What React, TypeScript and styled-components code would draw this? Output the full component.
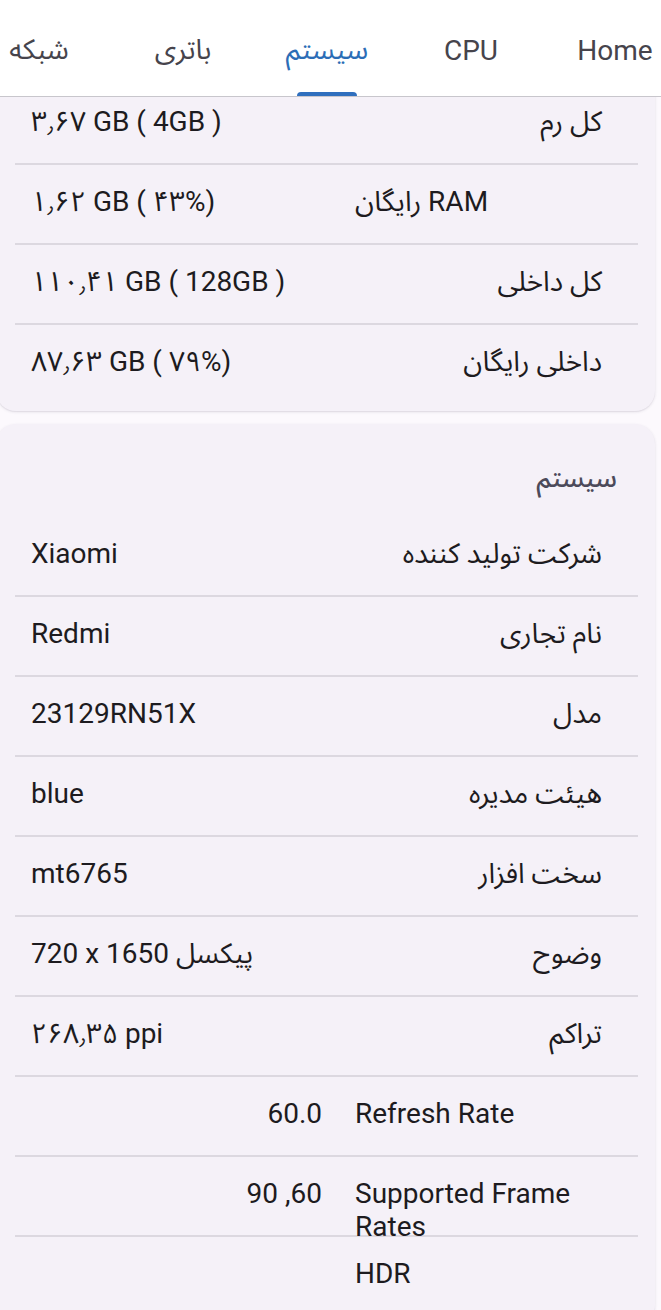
import React from "react";
import styled, { createGlobalStyle } from "styled-components";

const GlobalStyle = createGlobalStyle`
  html, body {
    margin: 0;
    padding: 0;
    height: 1310px;
    overflow: hidden;
    background: #fcf9fd;
    font-family: Roboto, "Noto Sans Arabic", "DejaVu Sans", sans-serif;
    color: #1d1b20;
  }
  * { box-sizing: border-box; }
`;

const Screen = styled.main`
  display: flex;
  flex-direction: column;
  height: 1310px;
  overflow: hidden;
`;

const TabBar = styled.nav`
  height: 97px;
  background: #ffffff;
  border-bottom: 1px solid #c8c6cc;
  overflow: hidden;
  flex-shrink: 0;
  position: relative;
  z-index: 2;
`;

const TabTrack = styled.div`
  display: flex;
  direction: rtl;
  width: 720px;
  height: 100%;
  margin-left: -33px;
`;

const Tab = styled.div<{ $active?: boolean }>`
  flex: 1;
  position: relative;
  display: flex;
  align-items: center;
  justify-content: center;
  padding-top: 4px;
  font-size: 28px;
  color: ${({ $active }) => ($active ? "#2c6db6" : "#46444c")};
`;

const Indicator = styled.span`
  position: absolute;
  bottom: -1px;
  left: 50%;
  width: 60px;
  height: 5px;
  margin-left: -30px;
  background: #2f6fbe;
  border-radius: 4px 4px 0 0;
`;

const Content = styled.section`
  flex: 1;
  overflow: hidden;
  display: flex;
  flex-direction: column;
  gap: 13px;
`;

const Card = styled.div<{ $cut?: boolean }>`
  margin: ${({ $cut }) => ($cut ? "-12px 6px 0 -4px" : "0 6px 0 -4px")};
  padding: 0 17px 8px 19px;
  background: #f5f1f8;
  border-radius: ${({ $cut }) => ($cut ? "0 0 20px 20px" : "20px")};
  box-shadow: 0 1px 3px rgba(60, 50, 80, 0.12), 0 1px 1px rgba(60, 50, 80, 0.06);
  flex-shrink: 0;
`;

const CardTitle = styled.h2`
  margin: 0;
  padding: 39px 21px 24px 0;
  direction: rtl;
  text-align: right;
  font-size: 26px;
  line-height: 30px;
  font-weight: 500;
  color: #4c4a5a;
`;

const Row = styled.div<{ $last?: boolean }>`
  display: grid;
  grid-template-columns: 247px 291px;
  column-gap: 33px;
  direction: rtl;
  height: ${({ $last }) => ($last ? "78px" : "80px")};
  padding: 20px 36px 0 16px;
  border-bottom: ${({ $last }) => ($last ? "none" : "2px solid #dcd8e0")};
  font-size: 28px;
  line-height: 33px;
`;

const Label = styled.div<{ $ltr?: boolean }>`
  direction: ${({ $ltr }) => ($ltr ? "ltr" : "rtl")};
  text-align: ${({ $ltr }) => ($ltr ? "left" : "right")};
`;

const Value = styled.div<{ $rtl?: boolean }>`
  direction: ${({ $rtl }) => ($rtl ? "rtl" : "ltr")};
  text-align: ${({ $rtl }) => ($rtl ? "right" : "left")};
  white-space: nowrap;
`;

type Item = { label: string; value: string; labelLtr?: boolean; valueRtl?: boolean };

const memory: Item[] = [
  { label: "کل رم", value: "۳٫۶۷ GB ( 4GB )" },
  { label: "رایگان RAM", value: "۱٫۶۲ GB ( ۴۳%)", labelLtr: true },
  { label: "کل داخلی", value: "۱۱۰٫۴۱ GB ( 128GB )" },
  { label: "داخلی رایگان", value: "۸۷٫۶۳ GB ( ۷۹%)" },
];

const system: Item[] = [
  { label: "شرکت تولید کننده", value: "Xiaomi" },
  { label: "نام تجاری", value: "Redmi" },
  { label: "مدل", value: "23129RN51X" },
  { label: "هیئت مدیره", value: "blue" },
  { label: "سخت افزار", value: "mt6765" },
  { label: "وضوح", value: "720 x 1650 پیکسل" },
  { label: "تراکم", value: "۲۶۸٫۳۵ ppi" },
  { label: "Refresh Rate", value: "60.0", labelLtr: true, valueRtl: true },
  { label: "Supported Frame Rates", value: "60, 90", labelLtr: true, valueRtl: true },
  { label: "HDR", value: "", labelLtr: true, valueRtl: true },
];

const tabs = ["Home", "CPU", "سیستم", "باتری", "شبکه"];

const InfoRows = ({ items, lastFlat }: { items: Item[]; lastFlat?: boolean }) => (
  <>
    {items.map((item, i) => (
      <Row key={item.label} $last={lastFlat && i === items.length - 1}>
        <Label $ltr={item.labelLtr}>{item.label}</Label>
        <Value $rtl={item.valueRtl}>{item.value}</Value>
      </Row>
    ))}
  </>
);

const App = () => {
  return (
    <Screen>
      <GlobalStyle />
      <TabBar>
        <TabTrack>
          {tabs.map((t, i) => (
            <Tab key={t} $active={i === 2}>
              {t}
              {i === 2 && <Indicator />}
            </Tab>
          ))}
        </TabTrack>
      </TabBar>
      <Content>
        <Card $cut>
          <InfoRows items={memory} lastFlat />
        </Card>
        <Card>
          <CardTitle>سیستم</CardTitle>
          <InfoRows items={system} />
        </Card>
      </Content>
    </Screen>
  );
};

export default App;
